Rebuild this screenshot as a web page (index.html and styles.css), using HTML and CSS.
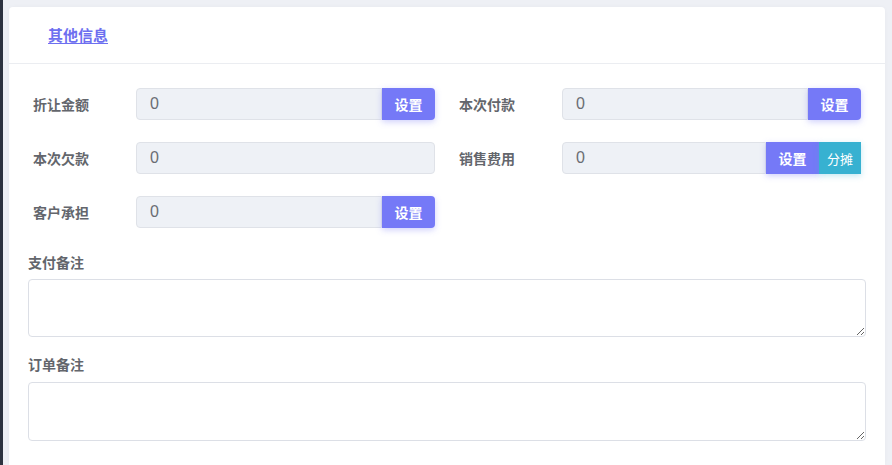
FILE: index.html
```html
<!DOCTYPE html>
<html lang="zh-CN">
<head>
<meta charset="utf-8">
<title>其他信息</title>
<link rel="stylesheet" href="styles.css">
</head>
<body>
<div class="layout">
  <div class="sidebar-edge"></div>
  <div class="main">
    <div class="card">
      <div class="card-header">
        <a class="tab-link" href="#">其他信息</a>
      </div>
      <div class="card-body">
        <div class="grid">
          <div class="field">
            <label class="field-label">折让金额</label>
            <div class="input-group">
              <input class="input" type="text" value="0" readonly>
              <button class="btn btn-primary">设置</button>
            </div>
          </div>
          <div class="field">
            <label class="field-label">本次付款</label>
            <div class="input-group">
              <input class="input" type="text" value="0" readonly>
              <button class="btn btn-primary">设置</button>
            </div>
          </div>
          <div class="field">
            <label class="field-label">本次欠款</label>
            <div class="input-group">
              <input class="input input-full" type="text" value="0" readonly>
            </div>
          </div>
          <div class="field">
            <label class="field-label">销售费用</label>
            <div class="input-group">
              <input class="input" type="text" value="0" readonly>
              <button class="btn btn-primary btn-square">设置</button>
              <button class="btn btn-info">分摊</button>
            </div>
          </div>
          <div class="field">
            <label class="field-label">客户承担</label>
            <div class="input-group">
              <input class="input" type="text" value="0" readonly>
              <button class="btn btn-primary">设置</button>
            </div>
          </div>
        </div>
        <div class="notes">
          <label class="note-label">支付备注</label>
          <textarea class="textarea"></textarea>
          <label class="note-label note-label-second">订单备注</label>
          <textarea class="textarea textarea-second"></textarea>
        </div>
      </div>
    </div>
  </div>
</div>
</body>
</html>
```
FILE: styles.css
```css
* { box-sizing: border-box; }
html, body {
  margin: 0;
  padding: 0;
  height: 100%;
  overflow: hidden;
}
body {
  font-family: "Noto Sans CJK SC", "Liberation Sans", sans-serif;
  color: #606266;
  background: #eef0f5;
}
.layout {
  display: flex;
  height: 465px;
}
.sidebar-edge {
  width: 3px;
  background: #2d3340;
  flex: none;
}
.main {
  flex: 1;
  padding: 7px 7px 0 6px;
  background: #eef0f5;
}
.card {
  background: #fff;
  border-radius: 4px 4px 0 0;
  height: 100%;
  box-shadow: 0 0 4px rgba(0,0,0,0.03);
}
.card-header {
  height: 57px;
  border-bottom: 1px solid #ebedf1;
  display: flex;
  align-items: center;
  padding-left: 39px;
  padding-bottom: 2px;
}
.tab-link {
  color: #6d6ff0;
  font-size: 15px;
  font-weight: 700;
  text-decoration: underline;
  text-underline-offset: 2px;
}
.card-body {
  padding: 24px 0 0 0;
}
.grid {
  display: grid;
  grid-template-columns: 402px 402px;
  column-gap: 24px;
  row-gap: 22px;
  padding: 0 24px;
}
.field {
  display: flex;
  align-items: center;
  height: 32px;
  min-width: 0;
}
.field-label {
  width: 103px;
  flex: none;
  font-size: 14px;
  font-weight: 700;
  color: #63666c;
}
.input-group {
  flex: 1;
  min-width: 0;
  display: flex;
  height: 32px;
}
.input {
  flex: 1 1 0;
  width: 0;
  min-width: 0;
  height: 32px;
  background: #eef1f6;
  border: 1px solid #dfe2e8;
  border-radius: 4px 0 0 4px;
  padding: 0 13px;
  font-family: "Liberation Sans", sans-serif;
  font-size: 16px;
  color: #6a6d73;
  outline: none;
}
.input-full {
  border-radius: 4px;
}
.btn {
  flex: none;
  border: none;
  height: 32px;
  color: #fff;
  font-family: "Noto Sans CJK SC", sans-serif;
  cursor: pointer;
  padding: 0;
}
.btn-primary {
  width: 53px;
  background: #7579f7;
  font-size: 14px;
  font-weight: 700;
  border-radius: 0 4px 4px 0;
  box-shadow: 0 2px 6px rgba(117,121,247,0.35);
}
.btn-square {
  border-radius: 0;
}
.btn-info {
  width: 42px;
  background: #37b1d1;
  font-size: 13px;
  border-radius: 0;
  box-shadow: 0 2px 6px rgba(55,177,209,0.3);
}
.notes {
  display: flex;
  flex-direction: column;
  padding: 0 19px;
  margin-top: 24px;
}
.note-label {
  font-size: 14px;
  font-weight: 700;
  line-height: 20px;
  color: #63666c;
  margin-bottom: 7px;
}
.note-label-second {
  margin-top: 17px;
  margin-bottom: 8px;
}
.textarea {
  height: 58px;
  border: 1px solid #dcdfe6;
  border-radius: 4px;
  resize: vertical;
  outline: none;
  background: #fff;
}
.textarea-second {
  height: 59px;
}
```
